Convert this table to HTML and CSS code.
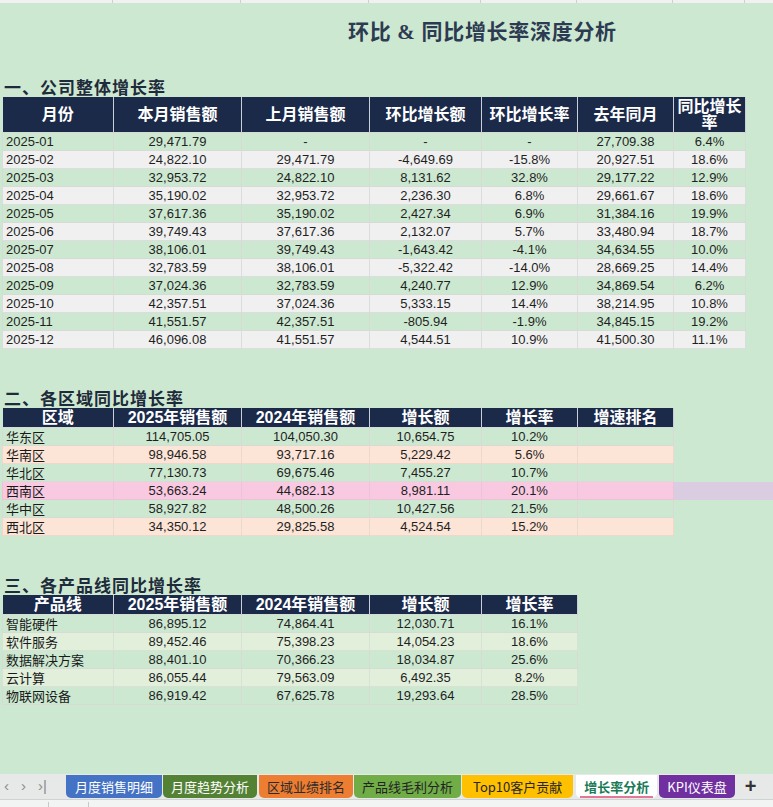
FILE: index.html
```html
<!DOCTYPE html>
<html lang="zh-CN">
<head>
<meta charset="utf-8">
<title>增长率分析</title>
<link rel="stylesheet" href="styles.css">
</head>
<body>
<div class="page">
  <div class="topstrip">
    <span class="c1"></span><span class="c2"></span><span class="c3"></span><span class="c4"></span><span class="c5"></span><span class="c6"></span><span class="c7"></span>
  </div>
  <div class="sheet">
    <div class="title">环比 &amp; 同比增长率深度分析</div>

    <div class="h">一、公司整体增长率</div>
    <table class="t1">
      <colgroup><col class="w1"><col class="w2"><col class="w2"><col class="w4"><col class="w5"><col class="w5"><col class="w7"></colgroup>
      <thead>
        <tr class="hh"><th>月份</th><th>本月销售额</th><th>上月销售额</th><th>环比增长额</th><th>环比增长率</th><th>去年同月</th><th class="wrap">同比增长率</th></tr>
      </thead>
      <tbody>
        <tr class="g"><td class="l">2025-01</td><td>29,471.79</td><td>-</td><td>-</td><td>-</td><td>27,709.38</td><td>6.4%</td></tr>
        <tr class="w"><td class="l">2025-02</td><td>24,822.10</td><td>29,471.79</td><td>-4,649.69</td><td>-15.8%</td><td>20,927.51</td><td>18.6%</td></tr>
        <tr class="g"><td class="l">2025-03</td><td>32,953.72</td><td>24,822.10</td><td>8,131.62</td><td>32.8%</td><td>29,177.22</td><td>12.9%</td></tr>
        <tr class="w"><td class="l">2025-04</td><td>35,190.02</td><td>32,953.72</td><td>2,236.30</td><td>6.8%</td><td>29,661.67</td><td>18.6%</td></tr>
        <tr class="g"><td class="l">2025-05</td><td>37,617.36</td><td>35,190.02</td><td>2,427.34</td><td>6.9%</td><td>31,384.16</td><td>19.9%</td></tr>
        <tr class="w"><td class="l">2025-06</td><td>39,749.43</td><td>37,617.36</td><td>2,132.07</td><td>5.7%</td><td>33,480.94</td><td>18.7%</td></tr>
        <tr class="g"><td class="l">2025-07</td><td>38,106.01</td><td>39,749.43</td><td>-1,643.42</td><td>-4.1%</td><td>34,634.55</td><td>10.0%</td></tr>
        <tr class="w"><td class="l">2025-08</td><td>32,783.59</td><td>38,106.01</td><td>-5,322.42</td><td>-14.0%</td><td>28,669.25</td><td>14.4%</td></tr>
        <tr class="g"><td class="l">2025-09</td><td>37,024.36</td><td>32,783.59</td><td>4,240.77</td><td>12.9%</td><td>34,869.54</td><td>6.2%</td></tr>
        <tr class="w"><td class="l">2025-10</td><td>42,357.51</td><td>37,024.36</td><td>5,333.15</td><td>14.4%</td><td>38,214.95</td><td>10.8%</td></tr>
        <tr class="g"><td class="l">2025-11</td><td>41,551.57</td><td>42,357.51</td><td>-805.94</td><td>-1.9%</td><td>34,845.15</td><td>19.2%</td></tr>
        <tr class="w"><td class="l">2025-12</td><td>46,096.08</td><td>41,551.57</td><td>4,544.51</td><td>10.9%</td><td>41,500.30</td><td>11.1%</td></tr>
      </tbody>
    </table>

    <div class="h gap">二、各区域同比增长率</div>
    <table class="t2">
      <colgroup><col class="w1"><col class="w2"><col class="w2"><col class="w4"><col class="w5"><col class="w5"><col class="wf"></colgroup>
      <thead>
        <tr class="hs"><th>区域</th><th>2025年销售额</th><th>2024年销售额</th><th>增长额</th><th>增长率</th><th>增速排名</th><th class="fill"></th></tr>
      </thead>
      <tbody>
        <tr class="g"><td class="l cn">华东区</td><td>114,705.05</td><td>104,050.30</td><td>10,654.75</td><td>10.2%</td><td></td><td class="fill"></td></tr>
        <tr class="p"><td class="l cn">华南区</td><td>98,946.58</td><td>93,717.16</td><td>5,229.42</td><td>5.6%</td><td></td><td class="fill"></td></tr>
        <tr class="g"><td class="l cn">华北区</td><td>77,130.73</td><td>69,675.46</td><td>7,455.27</td><td>10.7%</td><td></td><td class="fill"></td></tr>
        <tr class="k sel"><td class="l cn">西南区</td><td>53,663.24</td><td>44,682.13</td><td>8,981.11</td><td>20.1%</td><td></td><td class="fill"></td></tr>
        <tr class="g"><td class="l cn">华中区</td><td>58,927.82</td><td>48,500.26</td><td>10,427.56</td><td>21.5%</td><td></td><td class="fill"></td></tr>
        <tr class="p"><td class="l cn">西北区</td><td>34,350.12</td><td>29,825.58</td><td>4,524.54</td><td>15.2%</td><td></td><td class="fill"></td></tr>
      </tbody>
    </table>

    <div class="h gap">三、各产品线同比增长率</div>
    <table class="t3">
      <colgroup><col class="w1"><col class="w2"><col class="w2"><col class="w4"><col class="w5"></colgroup>
      <thead>
        <tr class="hs"><th>产品线</th><th>2025年销售额</th><th>2024年销售额</th><th>增长额</th><th>增长率</th></tr>
      </thead>
      <tbody>
        <tr class="g"><td class="l cn">智能硬件</td><td>86,895.12</td><td>74,864.41</td><td>12,030.71</td><td>16.1%</td></tr>
        <tr class="lg"><td class="l cn">软件服务</td><td>89,452.46</td><td>75,398.23</td><td>14,054.23</td><td>18.6%</td></tr>
        <tr class="g"><td class="l cn">数据解决方案</td><td>88,401.10</td><td>70,366.23</td><td>18,034.87</td><td>25.6%</td></tr>
        <tr class="lg"><td class="l cn">云计算</td><td>86,055.44</td><td>79,563.09</td><td>6,492.35</td><td>8.2%</td></tr>
        <tr class="g"><td class="l cn">物联网设备</td><td>86,919.42</td><td>67,625.78</td><td>19,293.64</td><td>28.5%</td></tr>
      </tbody>
    </table>
  </div>

  <div class="tabbar">
    <div class="nav"><span>&lsaquo;</span><span>&rsaquo;</span><span>&rsaquo;|</span></div>
    <div class="tabs">
      <div class="tab blue">月度销售明细</div>
      <div class="tab dkgreen">月度趋势分析</div>
      <div class="tab orange">区域业绩排名</div>
      <div class="tab green">产品线毛利分析</div>
      <div class="tab yellow">Top10客户贡献</div>
      <div class="tab active">增长率分析</div>
      <div class="tab purple">KPI仪表盘</div>
    </div>
    <div class="plus">+</div>
  </div>
  <div class="status"><span class="s1"></span><span class="s2"></span></div>
</div>
</body>
</html>
```

FILE: styles.css
```css
html, body {
  margin: 0;
  padding: 0;
}
body {
  width: 773px;
  height: 807px;
  overflow: hidden;
  background: #cde8d1;
  font-family: "Liberation Sans", "Noto Sans CJK SC", sans-serif;
  color: #222;
}
.page {
  display: flex;
  flex-direction: column;
  height: 807px;
}
.topstrip {
  flex: none;
  height: 3px;
  display: flex;
  background: #f1f1f1;
  padding-left: 2px;
}
.topstrip span {
  box-sizing: border-box;
  border-right: 1px solid #cfcfcf;
}
.topstrip .c1 { width: 111px; }
.topstrip .c2, .topstrip .c3 { width: 128px; }
.topstrip .c4 { width: 112px; }
.topstrip .c5, .topstrip .c6 { width: 96px; }
.topstrip .c7 { width: 72px; }

.sheet {
  flex: 1;
  background: #cde8d1;
  padding-left: 2px;
  overflow: hidden;
}
.title {
  height: 73px;
  box-sizing: border-box;
  padding-top: 15px;
  padding-left: 346px;
  font-family: "Liberation Serif", "Noto Sans CJK SC", serif;
  font-weight: 700;
  font-size: 21px;
  line-height: 28px;
  color: #2d3b52;
  white-space: nowrap;
  letter-spacing: 0.7px;
}
.h {
  height: 21px;
  padding-left: 2px;
  font-family: "Noto Sans CJK SC", sans-serif;
  font-weight: 700;
  font-size: 17px;
  line-height: 21px;
  letter-spacing: 1px;
  color: #1e2b3a;
  white-space: nowrap;
}
.h.gap { margin-top: 38px; }

table {
  border-collapse: collapse;
  table-layout: fixed;
}
.t1 { width: 743px; }
.t2 { width: 771px; }
.t3 { width: 575px; }
col.w1 { width: 111px; }
col.w2 { width: 128px; }
col.w4 { width: 112px; }
col.w5 { width: 96px; }
col.w7 { width: 72px; }
col.wf { width: 100px; }

th {
  background: #1c2a4a;
  color: #fff;
  font-weight: 700;
  font-size: 16px;
  padding: 0;
  text-align: center;
  border-left: 1px solid #c9ced8;
  border-right: 1px solid #c9ced8;
  font-family: "Liberation Sans", "Noto Sans CJK SC", sans-serif;
  white-space: nowrap;
  overflow: hidden;
}
th:first-child { border-left: none; }
.hh th {
  height: 35px;
  line-height: 16px;
}
.hh th.wrap {
  padding: 0 3px;
  white-space: normal;
}
.hs th {
  height: 19px;
  line-height: 18px;
}
th.fill, td.fill {
  background: transparent;
  border: none;
}
td {
  height: 17px;
  padding: 0;
  font-size: 13px;
  line-height: 17px;
  text-align: center;
  color: #1f1f1f;
  border: 1px solid #d6dbd6;
  white-space: nowrap;
  overflow: hidden;
}
td.l {
  text-align: left;
  padding-left: 3px;
}
td.cn {
  font-family: "Noto Sans CJK SC", sans-serif;
  font-size: 13px;
  line-height: 17px;
  color: #1a1a1a;
}
tr.g td { background: #cde8d1; }
tr.w td { background: #f0f0f0; border-color: #dcdcdc; }
tr.p td { background: #fce4d6; border-color: #eed8cc; }
tr.k td { background: #f9c9e2; border-color: #ecc2d6; }
tr.lg td { background: #e1efdb; border-color: #d7e2d3; }
tr.k td.fill { background: #dacde2; }
tr.g td.fill, tr.p td.fill { background: transparent; }
tr.sel td:first-child { box-shadow: -2px 0 0 #1f7a4d; }

.tabbar {
  flex: none;
  height: 26px;
  background: #e6e9e8;
  display: flex;
  align-items: flex-start;
  border-bottom: 1px solid #cfd3d2;
  box-sizing: border-box;
}
.nav {
  width: 66px;
  display: flex;
  gap: 12px;
  padding-left: 4px;
  padding-top: 3px;
  color: #8a8d8c;
  font-size: 15px;
  line-height: 18px;
  box-sizing: border-box;
}
.tabs {
  display: flex;
  gap: 1px;
  padding-top: 1px;
}
.tab {
  height: 23px;
  padding: 0 8px;
  font-family: "Noto Sans CJK SC", sans-serif;
  font-size: 13px;
  line-height: 23px;
  border-radius: 0 0 5px 5px;
  white-space: nowrap;
}
.tab.blue { background: #4472c4; color: #fff; padding: 0 9px; }
.tab.dkgreen { background: #548235; color: #fff; }
.tab.orange { background: #ed7d31; color: #2b2b2b; margin-left: 1px; }
.tab.green { background: #70ad47; color: #232323; }
.tab.yellow { background: #ffc000; color: #262626; padding: 0 11px; margin-right: 2px; }
.tab.active {
  background: #fff;
  color: #1a7a56;
  font-weight: 700;
  position: relative;
  margin-right: 1px;
}
.tab.active::after {
  content: "";
  position: absolute;
  left: 4px;
  right: 4px;
  bottom: 0;
  height: 2px;
  background: #e27896;
}
.tab.purple { background: #7030a0; color: #fff; }
.plus {
  margin-left: 10px;
  font-size: 20px;
  font-weight: 700;
  line-height: 24px;
  color: #333;
}
.status {
  flex: none;
  height: 7px;
  background: #f2f3f3;
  position: relative;
}
.status .s1 {
  position: absolute;
  left: 48px;
  top: 2px;
  width: 1px;
  height: 5px;
  background: #c8c8c8;
}
.status .s2 {
  position: absolute;
  left: 88px;
  top: 2px;
  width: 1px;
  height: 5px;
  background: #c8c8c8;
}
```
